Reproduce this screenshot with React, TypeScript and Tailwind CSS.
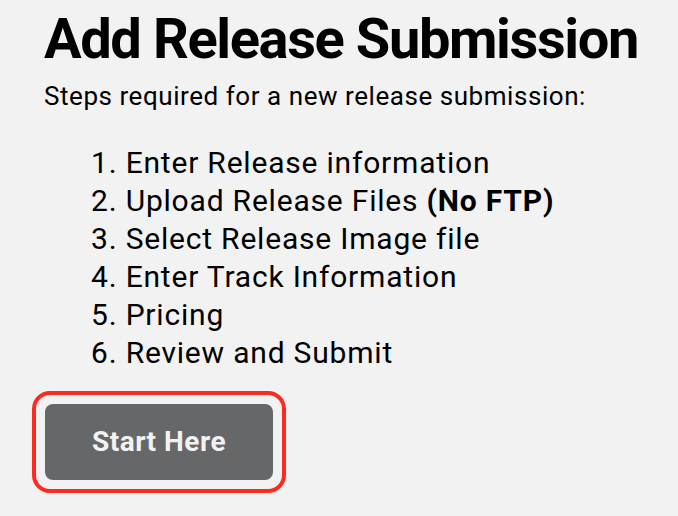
import React from 'react';

const STEPS: React.ReactNode[] = [
    'Enter Release information',
    <>Upload Release Files <b className="font-bold">(No FTP)</b></>,
    'Select Release Image file',
    'Enter Track Information',
    'Pricing',
    'Review and Submit',
];

export default function App() {
    return (
        <div className="min-h-[516px] w-full bg-[#f2f2f2] text-black pl-[44px] pt-[11px] font-['Roboto',sans-serif]">
            <h1 className="text-[56px] leading-none font-bold tracking-[-1.4px] whitespace-nowrap">Add Release Submission</h1>
            <p className="mt-[16px] text-[26px] leading-none tracking-[0.55px] whitespace-nowrap">Steps required for a new release submission:</p>

            <ol className="mt-[35px] pl-[47px] list-decimal list-inside text-[30px] leading-[37.9px] tracking-[0.8px]">
                {STEPS.map((s, i) => (
                    <li key={i}>{s}</li>
                ))}
            </ol>

            {/* highlighted start button */}
            <div className="mt-[20px] inline-flex rounded-[18px] border-4 border-[#ff2a1f] p-[9px] -ml-[12px]">
                <button className="w-[228px] h-[76px] rounded-[8px] bg-[#666769] text-[#f2f2f2] text-[28px] font-bold tracking-[0.5px]">
                    Start Here
                </button>
            </div>
        </div>
    );
}
